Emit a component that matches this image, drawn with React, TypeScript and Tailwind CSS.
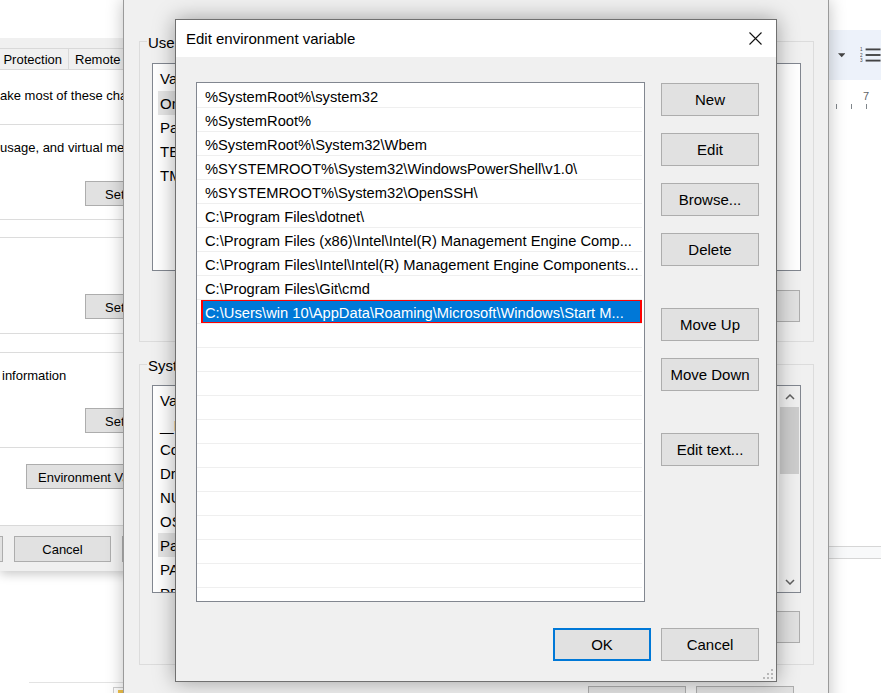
import React from "react";

const pathRows = [
  "%SystemRoot%\\system32",
  "%SystemRoot%",
  "%SystemRoot%\\System32\\Wbem",
  "%SYSTEMROOT%\\System32\\WindowsPowerShell\\v1.0\\",
  "%SYSTEMROOT%\\System32\\OpenSSH\\",
  "C:\\Program Files\\dotnet\\",
  "C:\\Program Files (x86)\\Intel\\Intel(R) Management Engine Comp...",
  "C:\\Program Files\\Intel\\Intel(R) Management Engine Components...",
  "C:\\Program Files\\Git\\cmd",
  "C:\\Users\\win 10\\AppData\\Roaming\\Microsoft\\Windows\\Start M...",
];

const userVars: React.ReactNode[] = ["OneDrive", "Path", "TEMP", "TMP"];
const systemVars: React.ReactNode[] = [
  <>
    <span className="tracking-[-3px]">__</span>
    <span className="ml-[3px]">PSLockDownPolicy</span>
  </>,
  "ComSpec",
  "DriverData",
  "NUMBER_OF_PROCESSORS",
  "OS",
  "Path",
  "PATHEXT",
  "PROCESSOR_ARCHITECTURE",
];

function WinButton({
  children,
  className = "",
}: {
  children?: React.ReactNode;
  className?: string;
}) {
  return (
    <div
      className={`flex items-center justify-center pt-[2px] bg-[#e1e1e1] border border-[#adadad] whitespace-nowrap overflow-hidden shrink-0 ${className}`}
    >
      {children}
    </div>
  );
}

function Chevron({ up }: { up?: boolean }) {
  return (
    <svg width="10" height="6" viewBox="0 0 10 6">
      <path
        d={up ? "M1 5 L5 1 L9 5" : "M1 1 L5 5 L9 1"}
        fill="none"
        stroke="#606060"
        strokeWidth="1.5"
      />
    </svg>
  );
}

// System Properties window, mostly off-screen to the left
function SystemProperties() {
  return (
    <div className="absolute left-0 top-0 w-[420px] h-[571px] flex flex-col bg-[#f0f0f0] text-[13px] shadow-[0_3px_10px_rgba(0,0,0,0.22)]">
      <div className="h-[38px] bg-white" />
      <div className="h-[31px] flex items-end">
        <div className="h-[21px] w-[69px] border-t border-r border-[#d9d9d9] flex items-center justify-end pt-[2px] pr-[6px] overflow-hidden whitespace-nowrap">
          <span className="shrink-0">System Protection</span>
        </div>
        <div className="h-[21px] w-[60px] border-t border-r border-[#d9d9d9] flex items-center pt-[2px] pl-[6px] whitespace-nowrap">
          Remote
        </div>
      </div>
      <div className="h-[457px] bg-white border-y border-[#d9d9d9] flex flex-col whitespace-nowrap">
        <div className="mt-[18px] leading-[16px]">ake most of these changes.</div>

        <div className="mt-[20px] ml-[-12px] w-[320px] border border-[#dcdcdc] flex flex-col pt-[15px] pb-[13px]">
          <div className="leading-[16px] pl-[11px]">usage, and virtual memory</div>
          <WinButton className="mt-[25px] ml-[96px] w-[98px] h-[25px]">Settings...</WinButton>
        </div>

        <div className="mt-[17px] ml-[-12px] w-[320px] border border-[#dcdcdc] flex flex-col pt-[56px] pb-[14px]">
          <WinButton className="ml-[96px] w-[98px] h-[25px]">Settings...</WinButton>
        </div>

        <div className="mt-[18px] ml-[-12px] w-[320px] border border-[#dcdcdc] flex flex-col pt-[15px] pb-[14px]">
          <div className="leading-[16px] pl-[13px]">information</div>
          <WinButton className="mt-[24px] ml-[96px] w-[98px] h-[25px]">Settings...</WinButton>
        </div>

        <WinButton className="mt-[16px] ml-[26px] w-[170px] h-[25px] !justify-start pl-[11px]">
          Environment Variables...
        </WinButton>
      </div>
      <div className="flex-1 flex items-start pt-[10px] gap-[11px] ml-[-94px]">
        <WinButton className="w-[97px] h-[26px]">OK</WinButton>
        <WinButton className="w-[97px] h-[26px]">Cancel</WinButton>
        <WinButton className="w-[97px] h-[26px]">Apply</WinButton>
      </div>
    </div>
  );
}

function VarList({
  names,
  highlight,
  scroll,
}: {
  names: React.ReactNode[];
  highlight: number;
  scroll?: boolean;
}) {
  return (
    <div className="h-[208px] bg-white border border-[#828790] flex overflow-hidden">
      <div className="flex-1 flex flex-col">
        <div className="h-[27px] shrink-0 flex items-center pt-[3px] pl-[7px]">Variable</div>
        {names.map((n, i) => (
          <div
            key={i}
            className={`h-[24px] shrink-0 ml-[5px] w-[150px] pl-[2px] pt-[3px] flex items-center whitespace-nowrap overflow-hidden ${
              i === highlight ? "bg-[#e5e5e5]" : ""
            }`}
          >
            {n}
          </div>
        ))}
      </div>
      {scroll && (
        <div className="w-[21px] bg-[#f0f0f0] flex flex-col">
          <div className="h-[21px] flex items-center justify-center">
            <Chevron up />
          </div>
          <div className="h-[67px] mx-[1px] bg-[#cdcdcd]" />
          <div className="flex-1" />
          <div className="h-[21px] flex items-center justify-center">
            <Chevron />
          </div>
        </div>
      )}
    </div>
  );
}

// Environment Variables window
function EnvironmentVariables() {
  return (
    <div className="absolute left-[123px] top-0 w-[706px] h-[730px] bg-[#f0f0f0] border-x border-[#9a9a9a] shadow-[0_0_16px_rgba(0,0,0,0.25)] pl-[15px] pr-[14px] flex flex-col text-[15px]">
      <div className="relative mt-[41px] h-[301px] border border-[#dcdcdc] flex flex-col pt-[21px] px-[12px]">
        <div className="absolute left-[7px] top-[-10px] px-[1px] leading-[18px] pt-[2px] bg-[#f0f0f0]">
          User variables for win 10
        </div>
        <VarList names={userVars} highlight={0} />
        <div className="mt-[19px] flex justify-end gap-[10px] pr-[1px]">
          <WinButton className="w-[98px] h-[32px]">New...</WinButton>
          <WinButton className="w-[98px] h-[32px]">Edit...</WinButton>
          <WinButton className="w-[98px] h-[32px]">Delete</WinButton>
        </div>
      </div>

      <div className="relative mt-[22px] h-[301px] border border-[#dcdcdc] flex flex-col pt-[20px] px-[12px]">
        <div className="absolute left-[7px] top-[-10px] px-[1px] leading-[18px] pt-[2px] bg-[#f0f0f0]">
          System variables
        </div>
        <VarList names={systemVars} highlight={5} scroll />
        <div className="mt-[18px] flex justify-end gap-[10px] pr-[1px]">
          <WinButton className="w-[98px] h-[32px]">New...</WinButton>
          <WinButton className="w-[98px] h-[32px]">Edit...</WinButton>
          <WinButton className="w-[98px] h-[32px]">Delete</WinButton>
        </div>
      </div>

      <div className="mt-[21px] flex justify-end gap-[10px] pr-[20px]">
        <WinButton className="w-[98px] h-[32px]">OK</WinButton>
        <WinButton className="w-[98px] h-[32px]">Cancel</WinButton>
      </div>
    </div>
  );
}

function EditDialog() {
  const empty = Array.from({ length: 12 });
  return (
    <div className="absolute left-[175px] top-[19px] w-[602px] h-[663px] border border-[#707070] bg-[#f0f0f0] flex flex-col text-[15px] shadow-[0_0_20px_rgba(0,0,0,0.35)]">
      <div className="h-[37px] shrink-0 bg-white flex items-center justify-between pl-[10px]">
        <span className="pt-[2px]">Edit environment variable</span>
        <div className="w-[42px] h-full flex items-center justify-center">
          <svg width="13" height="13" viewBox="0 0 13 13">
            <path d="M0.5 0.5 L12.5 12.5 M12.5 0.5 L0.5 12.5" stroke="#111" strokeWidth="1.1" />
          </svg>
        </div>
      </div>

      <div className="flex-1 flex flex-col pt-[25px] pl-[20px]">
        <div className="flex gap-[16px]">
          <div className="w-[449px] h-[520px] shrink-0 border border-[#828790] bg-white pt-[1px] overflow-hidden flex flex-col text-[14.7px]">
            {pathRows.map((p, i) => (
              <div
                key={p}
                className="relative h-[24px] shrink-0 mr-[2px] border-b border-[#efefef] flex items-center pt-[3px] pl-[8px] whitespace-nowrap overflow-hidden"
              >
                {i === pathRows.length - 1 ? (
                  <div className="absolute left-[4px] right-0 top-[-1px] bottom-[-1px] border-2 border-[#ff0000] bg-[#0078d7] text-white flex items-center pt-[3px] pl-[2px]">
                    {p}
                  </div>
                ) : (
                  p
                )}
              </div>
            ))}
            {empty.map((_, i) => (
              <div key={i} className="h-[24px] shrink-0 mr-[2px] border-b border-[#efefef]" />
            ))}
          </div>

          <div className="w-[98px] flex flex-col pt-[1px]">
            <WinButton className="h-[33px]">New</WinButton>
            <WinButton className="h-[33px] mt-[17px]">Edit</WinButton>
            <WinButton className="h-[33px] mt-[17px]">Browse...</WinButton>
            <WinButton className="h-[33px] mt-[17px]">Delete</WinButton>
            <WinButton className="h-[33px] mt-[42px]">Move Up</WinButton>
            <WinButton className="h-[33px] mt-[17px]">Move Down</WinButton>
            <WinButton className="h-[33px] mt-[42px]">Edit text...</WinButton>
          </div>
        </div>

        <div className="mt-[26px] flex justify-end gap-[10px] pr-[17px]">
          <WinButton className="w-[98px] h-[33px] !border-2 !border-[#0078d7]">OK</WinButton>
          <WinButton className="w-[98px] h-[33px]">Cancel</WinButton>
        </div>
      </div>

      {/* resize grip */}
      <svg className="absolute right-[3px] bottom-[2px]" width="10" height="10" viewBox="0 0 10 10">
        <rect x="8" y="0" width="2" height="2" fill="#b8b8b8" />
        <rect x="4" y="4" width="2" height="2" fill="#b8b8b8" />
        <rect x="8" y="4" width="2" height="2" fill="#b8b8b8" />
        <rect x="0" y="8" width="2" height="2" fill="#b8b8b8" />
        <rect x="4" y="8" width="2" height="2" fill="#b8b8b8" />
        <rect x="8" y="8" width="2" height="2" fill="#b8b8b8" />
      </svg>
    </div>
  );
}

// Docs page peeking out on the right
function DocsBackdrop() {
  return (
    <div className="absolute left-[700px] top-0 w-[181px] h-full flex flex-col bg-white">
      <div className="h-[30px] shrink-0" />
      <div className="h-[50px] shrink-0 bg-[#edf2fa] flex items-center pl-[138px] gap-[15px]">
        <svg width="8" height="5" viewBox="0 0 8 5">
          <path d="M0 0 L8 0 L4 4.5 Z" fill="#444" />
        </svg>
        <svg width="22" height="18" viewBox="0 0 22 18">
          <text x="0" y="5" fontSize="5" fill="#444" fontFamily="Liberation Sans, sans-serif">1</text>
          <text x="0" y="11" fontSize="5" fill="#444" fontFamily="Liberation Sans, sans-serif">2</text>
          <text x="0" y="17" fontSize="5" fill="#444" fontFamily="Liberation Sans, sans-serif">3</text>
          <rect x="6" y="2" width="16" height="2" fill="#444" />
          <rect x="6" y="8" width="16" height="2" fill="#444" />
          <rect x="6" y="14" width="16" height="2" fill="#444" />
        </svg>
      </div>
      <div className="h-[30px] shrink-0 relative">
        <span className="absolute left-[163px] top-[10px] text-[11px] leading-[12px] text-[#5f6368]">
          7
        </span>
        <div className="absolute left-[136px] top-[24px] w-px h-[5px] bg-[#80868b]" />
        <div className="absolute left-[151px] top-[24px] w-px h-[5px] bg-[#80868b]" />
        <div className="absolute left-[166px] top-[24px] w-px h-[5px] bg-[#80868b]" />
      </div>
      <div className="mt-[436px] h-[13px] shrink-0 bg-[#f8f9fa] border-y border-[#d6d6d6]" />
    </div>
  );
}

export default function App() {
  return (
    <div className="relative w-[881px] h-[693px] overflow-hidden bg-white text-black font-['Liberation_Sans',Arial,sans-serif]">
      <DocsBackdrop />
      <div className="absolute left-[29px] top-[682px] w-[120px] h-px bg-[#e3e3e3]" />
      <div className="absolute left-[113px] top-[687px] w-[20px] h-[10px] border border-[#cfcfcf] bg-white">
        <div className="ml-[4px] mt-[2px] w-[8px] h-[6px] bg-[#f3c44a]" />
      </div>
      <SystemProperties />
      <EnvironmentVariables />
      <EditDialog />
    </div>
  );
}
